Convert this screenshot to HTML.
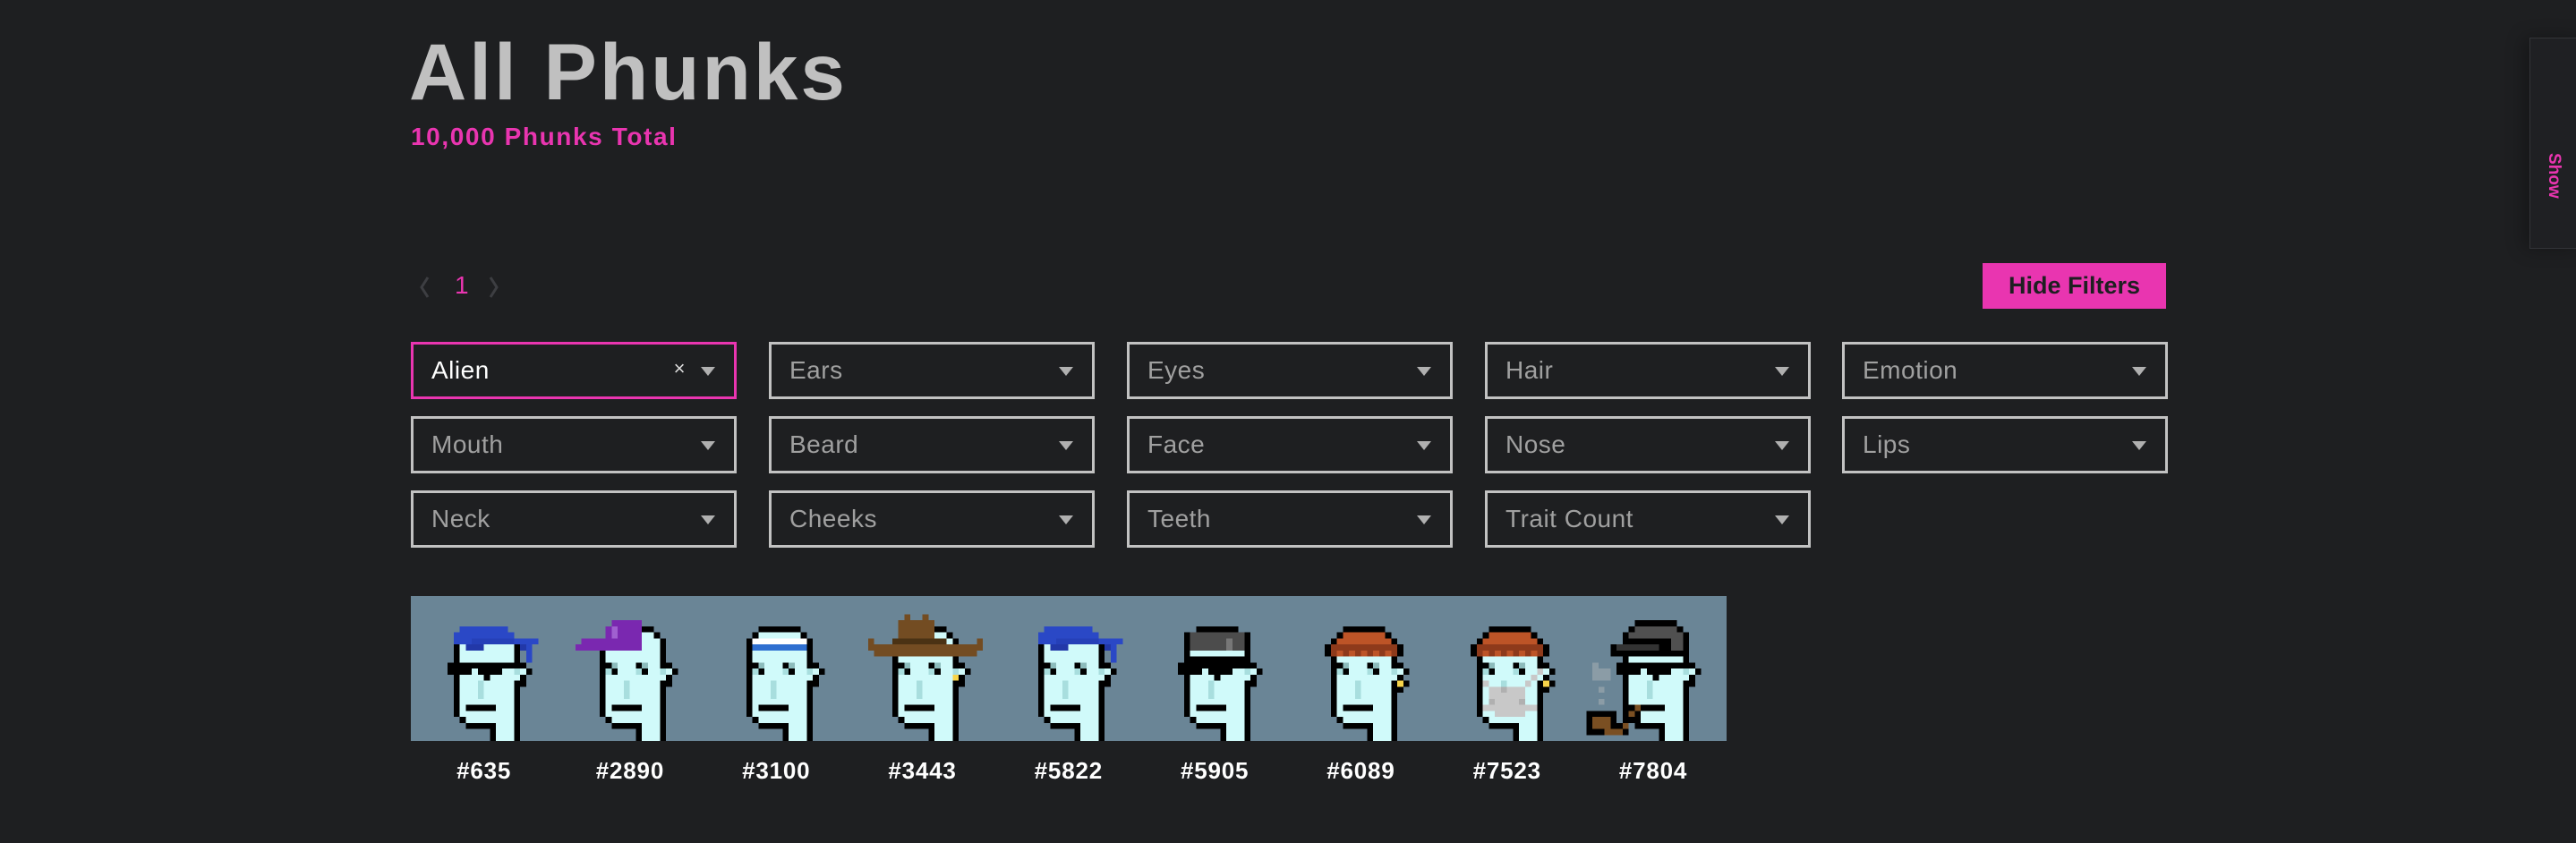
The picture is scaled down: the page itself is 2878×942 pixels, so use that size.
<!DOCTYPE html>
<html><head><meta charset="utf-8">
<style>
*{margin:0;padding:0;box-sizing:border-box}
html,body{width:2878px;height:942px;background:#1e1f21;overflow:hidden;font-family:"Liberation Sans",sans-serif}
.abs{position:absolute}
h1{position:absolute;left:457px;top:36px;font-size:89px;line-height:1;color:#c0c0c0;font-weight:700;letter-spacing:3px}
.sub{left:459px;top:139px;font-size:28px;line-height:1;color:#e935b0;font-weight:700;letter-spacing:1.6px}
.box{position:absolute;width:364px;height:64px;border:3px solid #c2c2c2;color:#a0a0a0;font-size:28px;line-height:58px;padding-left:20px;letter-spacing:0.5px}
.box .ar{position:absolute;right:21px;top:25px;width:0;height:0;border-left:8px solid transparent;border-right:8px solid transparent;border-top:10px solid #b0b0b0}
.btn{left:2215px;top:294px;width:205px;height:51px;background:#e935b0;color:#1e1f21;font-size:27px;line-height:51px;text-align:center;font-weight:700}
.show{left:2826px;top:42px;width:60px;height:236px;border:1px solid #333438;background:#1f2023;box-shadow:-6px 0 20px rgba(0,0,0,.3)}
.show span{position:absolute;left:13px;top:128px;transform-origin:0 0;transform:translate(24px,0) rotate(90deg);color:#e935b0;font-size:19px;font-weight:700;white-space:nowrap}
.strip{left:459px;top:666px;width:1470px;height:162px;background:#6a8596;display:flex}
.strip svg{width:163.3px;height:162px;flex:none}
.lab{position:absolute;top:846px;width:163.3px;text-align:center;color:#fff;font-size:26px;font-weight:700;letter-spacing:0.8px}
</style></head><body>
<h1>All Phunks</h1>
<div class="abs sub">10,000 Phunks Total</div>

<svg class="abs" style="left:464px;top:306px" width="110" height="30" viewBox="0 0 110 30">
<path d="M14 4 L7 15 L14 26" stroke="#3d3e42" stroke-width="3" fill="none"/>
<path d="M84 4 L91 15 L84 26" stroke="#3d3e42" stroke-width="3" fill="none"/>
</svg>
<div class="abs" style="left:508px;top:305px;font-size:28px;color:#e935b0;line-height:1">1</div>

<div class="abs btn">Hide Filters</div>
<div class="abs show"><span>Show</span></div>

<div class="box" style="left:459px;top:382px;border-color:#e935b0;color:#fff">Alien<span class="abs" style="right:54px;top:-2px;font-size:22px;color:#ddd">×</span><i class="ar"></i></div>
<div class="box" style="left:859px;top:382px">Ears<i class="ar"></i></div>
<div class="box" style="left:1259px;top:382px">Eyes<i class="ar"></i></div>
<div class="box" style="left:1659px;top:382px">Hair<i class="ar"></i></div>
<div class="box" style="left:2058px;top:382px">Emotion<i class="ar"></i></div>
<div class="box" style="left:459px;top:465px">Mouth<i class="ar"></i></div>
<div class="box" style="left:859px;top:465px">Beard<i class="ar"></i></div>
<div class="box" style="left:1259px;top:465px">Face<i class="ar"></i></div>
<div class="box" style="left:1659px;top:465px">Nose<i class="ar"></i></div>
<div class="box" style="left:2058px;top:465px">Lips<i class="ar"></i></div>
<div class="box" style="left:459px;top:548px">Neck<i class="ar"></i></div>
<div class="box" style="left:859px;top:548px">Cheeks<i class="ar"></i></div>
<div class="box" style="left:1259px;top:548px">Teeth<i class="ar"></i></div>
<div class="box" style="left:1659px;top:548px">Trait Count<i class="ar"></i></div>

<svg width="0" height="0" style="position:absolute">
<defs>
<g id="b" shape-rendering="crispEdges">
<g fill="#d0fafa">
<rect x="9" y="6" width="7" height="1"/><rect x="8" y="7" width="9" height="13"/>
<rect x="17" y="12" width="2" height="2"/><rect x="9" y="20" width="8" height="1"/><rect x="14" y="21" width="3" height="3"/>
</g>
<g fill="#000">
<rect x="9" y="5" width="7" height="1"/><rect x="8" y="6" width="1" height="1"/><rect x="16" y="6" width="1" height="1"/>
<rect x="7" y="7" width="1" height="13"/><rect x="17" y="7" width="1" height="5"/><rect x="18" y="11" width="1" height="1"/>
<rect x="19" y="12" width="1" height="1"/><rect x="18" y="13" width="1" height="2"/><rect x="17" y="14" width="1" height="10"/>
<rect x="8" y="20" width="1" height="1"/><rect x="9" y="21" width="5" height="1"/><rect x="13" y="22" width="1" height="2"/>
<rect x="9" y="18" width="5" height="1"/>
<rect x="8" y="11" width="1" height="1"/><rect x="13" y="11" width="1" height="1"/>
<rect x="9" y="12" width="1" height="1"/><rect x="14" y="12" width="1" height="1"/>
</g>
<g fill="#8cbcbc"><rect x="9" y="11" width="1" height="1"/><rect x="14" y="11" width="1" height="1"/></g>
<g fill="#a8dede"><rect x="8" y="12" width="1" height="1"/><rect x="13" y="12" width="1" height="1"/><rect x="17" y="12" width="1" height="1"/><rect x="11" y="14" width="1" height="3"/></g>
</g>
<g id="band" shape-rendering="crispEdges">
<rect x="8" y="5" width="8" height="1" fill="#2a48c6"/><rect x="7" y="6" width="10" height="2" fill="#2a48c6"/>
<rect x="9" y="8" width="3" height="1" fill="#2238a8"/><rect x="10" y="7" width="7" height="1" fill="#2540b8"/>
<rect x="17" y="7" width="4" height="1" fill="#2a48c6"/><rect x="18" y="8" width="2" height="1" fill="#2238a8"/><rect x="19" y="8" width="1" height="3" fill="#2a48c6"/>
</g>
<g id="shade" fill="#000" shape-rendering="crispEdges">
<rect x="6" y="11" width="12" height="1"/><rect x="6" y="12" width="3" height="1"/><rect x="11" y="12" width="3" height="1"/><rect x="7" y="13" width="1" height="1"/><rect x="12" y="13" width="1" height="1"/>
</g>
<g id="knit" shape-rendering="crispEdges">
<rect x="9" y="5" width="7" height="1" fill="#000"/><rect x="8" y="6" width="9" height="1" fill="#000"/><rect x="7" y="7" width="11" height="1" fill="#000"/><rect x="6" y="8" width="13" height="2" fill="#000"/>
<rect x="9" y="6" width="7" height="1" fill="#bd5427"/><rect x="8" y="7" width="9" height="1" fill="#bd5427"/>
<rect x="7" y="8" width="11" height="2" fill="#8e3a1b"/>
<g fill="#bd5427"><rect x="8" y="9" width="1" height="1"/><rect x="10" y="9" width="1" height="1"/><rect x="12" y="9" width="1" height="1"/><rect x="14" y="9" width="1" height="1"/><rect x="16" y="9" width="1" height="1"/></g>
<rect x="8" y="10" width="9" height="1" fill="#d0fafa"/>
</g>
<g id="ear" shape-rendering="crispEdges"><rect x="18" y="14" width="1" height="1" fill="#f7d44a"/><rect x="19" y="14" width="1" height="1" fill="#000"/><rect x="18" y="15" width="1" height="1" fill="#000"/></g>
</defs></svg>

<div class="abs strip">
<svg viewBox="0 0 24 24"><use href="#b"/><use href="#band"/><use href="#shade"/></svg>
<svg viewBox="0 0 24 24"><use href="#b"/><g shape-rendering="crispEdges" fill="#7a28b0"><rect x="9" y="4" width="5" height="1"/><rect x="8" y="5" width="6" height="2"/><rect x="4" y="7" width="10" height="2"/><rect x="3" y="8" width="1" height="1"/></g><rect x="9" y="5" width="1" height="2" fill="#a060d0" shape-rendering="crispEdges"/></svg>
<svg viewBox="0 0 24 24"><use href="#b"/><g shape-rendering="crispEdges"><rect x="8" y="7" width="9" height="1" fill="#fff"/><rect x="8" y="8" width="9" height="1" fill="#2f6fd0"/></g></svg>
<svg viewBox="0 0 24 24"><use href="#b"/><g shape-rendering="crispEdges"><rect x="9" y="3" width="1" height="1" fill="#734c22"/><rect x="12" y="3" width="1" height="1" fill="#734c22"/><rect x="8" y="4" width="6" height="3" fill="#734c22"/><rect x="7" y="7" width="9" height="1" fill="#4a3214"/><rect x="3" y="8" width="19" height="1" fill="#734c22"/><rect x="3" y="7" width="1" height="1" fill="#734c22"/><rect x="21" y="7" width="1" height="1" fill="#734c22"/><rect x="4" y="9" width="17" height="1" fill="#734c22"/></g><use href="#ear" transform="translate(-1,-1)"/></svg>
<svg viewBox="0 0 24 24"><use href="#b"/><use href="#band"/></svg>
<svg viewBox="0 0 24 24"><use href="#b"/><g shape-rendering="crispEdges"><rect x="9" y="5" width="7" height="1" fill="#000"/><rect x="8" y="6" width="9" height="3" fill="#4c4c4c"/><rect x="7" y="6" width="1" height="4" fill="#000"/><rect x="17" y="6" width="1" height="4" fill="#000"/><rect x="14" y="7" width="1" height="2" fill="#777"/><rect x="7" y="10" width="11" height="1" fill="#000"/></g><use href="#shade"/></svg>
<svg viewBox="0 0 24 24"><use href="#b"/><use href="#knit"/><use href="#ear"/></svg>
<svg viewBox="0 0 24 24"><use href="#b"/><use href="#knit"/><use href="#ear"/><g shape-rendering="crispEdges" fill="#c8c8c8"><rect x="17" y="12" width="1" height="1"/><rect x="16" y="13" width="1" height="1"/><rect x="8" y="14" width="1" height="1"/><rect x="15" y="14" width="1" height="1"/><rect x="9" y="15" width="6" height="3"/><rect x="8" y="18" width="9" height="1"/><rect x="10" y="19" width="5" height="1"/></g><g fill="#b0b0b0" shape-rendering="crispEdges"><rect x="11" y="15" width="1" height="1"/><rect x="9" y="17" width="1" height="1"/><rect x="14" y="17" width="1" height="1"/></g></svg>
<svg viewBox="0 0 24 24"><use href="#b"/><g shape-rendering="crispEdges"><rect x="9" y="4" width="7" height="1" fill="#000"/><rect x="8" y="5" width="9" height="1" fill="#000"/><rect x="9" y="5" width="7" height="1" fill="#505050"/><rect x="7" y="6" width="11" height="3" fill="#000"/><rect x="8" y="6" width="9" height="1" fill="#505050"/><rect x="15" y="7" width="2" height="2" fill="#505050"/><rect x="6" y="8" width="7" height="1" fill="#333"/><rect x="5" y="8" width="1" height="1" fill="#000"/><rect x="5" y="9" width="13" height="1" fill="#000"/><rect x="8" y="10" width="9" height="1" fill="#d0fafa"/></g><use href="#shade"/><g shape-rendering="crispEdges"><rect x="2" y="11" width="1" height="1" fill="#8b9ca6"/><rect x="2" y="12" width="3" height="2" fill="#8b9ca6"/><rect x="3" y="15" width="1" height="1" fill="#8b9ca6"/><rect x="3" y="17" width="1" height="1" fill="#8b9ca6"/><rect x="1" y="19" width="5" height="4" fill="#000"/><rect x="2" y="20" width="3" height="2" fill="#7a4f22"/><rect x="5" y="21" width="3" height="2" fill="#000"/><rect x="4" y="22" width="3" height="1" fill="#7a4f22"/><rect x="7" y="19" width="1" height="3" fill="#000"/><rect x="8" y="18" width="2" height="3" fill="#000"/><rect x="8" y="19" width="1" height="1" fill="#7a4f22"/><rect x="9" y="18" width="1" height="1" fill="#7a4f22"/><rect x="7" y="21" width="1" height="1" fill="#7a4f22"/></g></svg>
</div>
<div class="lab" style="left:459px">#635</div>
<div class="lab" style="left:622.3px">#2890</div>
<div class="lab" style="left:785.6px">#3100</div>
<div class="lab" style="left:948.9px">#3443</div>
<div class="lab" style="left:1112.2px">#5822</div>
<div class="lab" style="left:1275.5px">#5905</div>
<div class="lab" style="left:1438.8px">#6089</div>
<div class="lab" style="left:1602.1px">#7523</div>
<div class="lab" style="left:1765.4px">#7804</div>
</body></html>
